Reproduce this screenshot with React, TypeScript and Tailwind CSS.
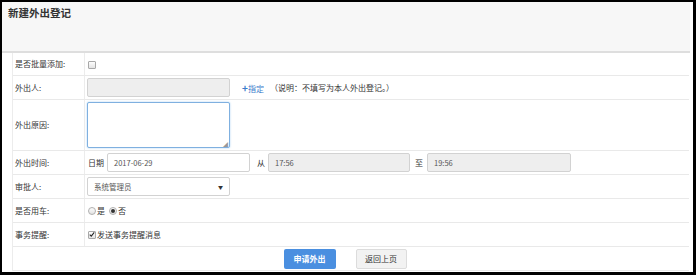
const font = { fontFamily: '"Noto Sans CJK SC", "Noto Sans", sans-serif' };

function Box({ checked }: { checked?: boolean }) {
  return (
    <span className="inline-flex h-[8px] w-[8px] items-center justify-center rounded-[1px] border border-[#a8a8a8] bg-gradient-to-b from-[#fdfdfd] to-[#e4e4e4]">
      {checked && (
        <svg viewBox="0 0 8 8" className="h-[7px] w-[7px]">
          <path d="M1 4.2 L3 6.2 L7 1.2" fill="none" stroke="#222" strokeWidth="1.4" />
        </svg>
      )}
    </span>
  );
}

function Radio({ checked }: { checked?: boolean }) {
  return (
    <span className="inline-flex h-[8px] w-[8px] items-center justify-center rounded-full border border-[#b0b0b0] bg-gradient-to-b from-[#fdfdfd] to-[#e2e2e2]">
      {checked && <span className="h-[4px] w-[4px] rounded-full bg-[#333]" />}
    </span>
  );
}

function Row({ label, h, children }: { label: string; h: string; children: React.ReactNode }) {
  return (
    <div className={`flex border-b border-[#e9e9e9] ${h}`}>
      <div className="flex w-[72px] items-center border-r border-[#ececec] pl-[2px] text-[8px] text-[#333]">
        {label}
      </div>
      <div className="flex flex-1 items-center pl-[2px] text-[8px] text-[#333]">{children}</div>
    </div>
  );
}

export default function App() {
  const input = 'h-[19px] rounded-[2px] border border-[#d2d2d2] px-[6px] text-[7.5px] leading-[17px] text-[#555]';
  return (
    <div className="h-[275px] w-[696px] bg-black pb-[3px] pl-[2px] pr-[3px] pt-[2px]" style={font}>
      <div className="flex h-full flex-col bg-white">
        <div className="mr-[3px] h-[51px] border-b-2 border-[#dedede] bg-[#f7f7f7] pl-[6px] pt-[3px]">
          <h1 className="text-[10.5px] font-bold text-[#333]">新建外出登记</h1>
        </div>
        <div className="ml-[10px] w-[677px] border-l border-[#ececec]">
          <Row label="是否批量添加:" h="h-[23px]">
            <span className="ml-[1px] mt-[2px] flex">
              <Box />
            </span>
          </Row>
          <Row label="外出人:" h="h-[24px]">
            <div className={`${input} w-[143px] bg-[#eeeeee]`} />
            <span className="ml-[12px] text-[#3b7ccc]">
              <span className="text-[10px] font-bold">+</span>指定
            </span>
            <span className="ml-[6px]">（说明：不填写为本人外出登记。）</span>
          </Row>
          <Row label="外出原因:" h="h-[51px]">
            <div className="relative h-[46px] w-[143px] rounded-[2px] border border-[#7fb0e0] bg-white shadow-[0_0_2px_rgba(102,175,233,0.6)]">
              <span className="absolute bottom-[1px] right-[1px] text-[5px] leading-none text-[#999]">◢</span>
            </div>
          </Row>
          <Row label="外出时间:" h="h-[24px]">
            <span className="ml-[1px]">日期</span>
            <div className={`${input} ml-[3px] w-[143px] bg-white`}>2017-06-29</div>
            <span className="ml-[7px]">从</span>
            <div className={`${input} ml-[3px] w-[142px] bg-[#eeeeee]`}>17:56</div>
            <span className="ml-[5px]">至</span>
            <div className={`${input} ml-[4px] w-[144px] bg-[#eeeeee]`}>19:56</div>
          </Row>
          <Row label="审批人:" h="h-[24px]">
            <div className={`${input} flex w-[143px] items-center justify-between bg-white`}>
              <span>系统管理员</span>
              <span className="text-[5px] text-[#333]">▼</span>
            </div>
          </Row>
          <Row label="是否用车:" h="h-[24px]">
            <span className="ml-[1px] flex items-center">
              <Radio />
              <span className="ml-[1px]">是</span>
              <span className="ml-[4px]" />
              <Radio checked />
              <span className="ml-[1px]">否</span>
            </span>
          </Row>
          <Row label="事务提醒:" h="h-[24px]">
            <span className="ml-[1px] flex items-center">
              <Box checked />
              <span className="ml-[1px]">发送事务提醒消息</span>
            </span>
          </Row>
          <div className="flex h-[24px] items-center justify-center gap-[20px] border-b border-[#e9e9e9] pr-[12px]">
            <button className="h-[20px] w-[52px] rounded-[2px] bg-[#4a8fe0] text-[8px] font-bold text-white">
              申请外出
            </button>
            <button className="h-[20px] w-[51px] rounded-[2px] border border-[#dcdcdc] bg-[#f2f2f2] text-[8px] text-[#333]">
              返回上页
            </button>
          </div>
        </div>
      </div>
    </div>
  );
}
